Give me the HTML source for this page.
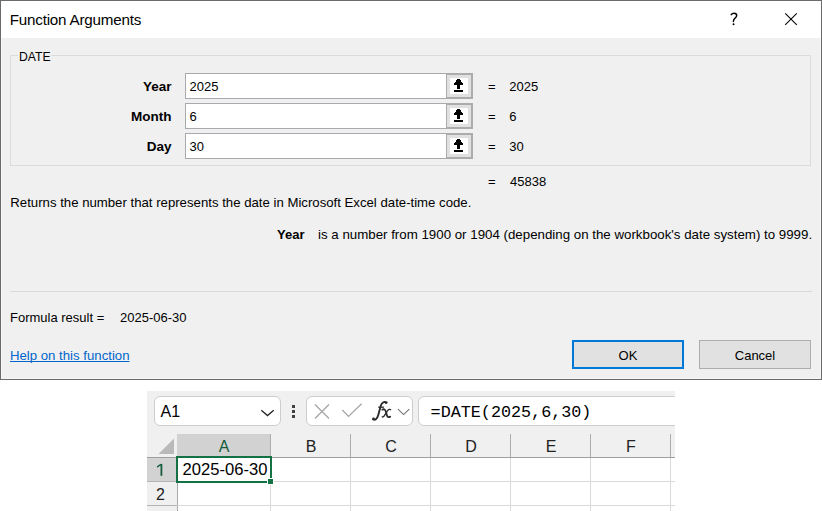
<!DOCTYPE html>
<html><head><meta charset="utf-8"><style>
html,body{margin:0;padding:0;width:822px;height:511px;overflow:hidden;background:#fff}
body{position:relative;font-family:"Liberation Sans",sans-serif}
body div, body svg{position:absolute}
body div div{position:absolute}
</style></head><body>
<div style="left:0px;top:0px;width:822px;height:511px;background:#fff"></div>
<div style="left:0px;top:0px;width:822px;height:380px;background:#6a6a6a"></div>
<div style="left:1px;top:1px;width:820px;height:378px;background:#f7f7f7"></div>
<div style="left:1px;top:1px;width:820px;height:37px;background:#fff"></div>
<div style="left:2px;top:38px;width:818px;height:340px;background:#f0f0f0"></div>
<div style="left:9.7px;top:12.33px;font-size:15.2px;line-height:15.2px;font-family:'Liberation Sans',sans-serif;white-space:pre;color:#000;letter-spacing:-0.2px">Function Arguments</div>
<svg style="left:726px;top:10px" width="16" height="18" viewBox="0 0 16 18"><path d="M5.2 4.7 C5.9 3.6 6.9 3.2 8 3.2 C9.6 3.2 10.7 4.2 10.7 5.5 C10.7 7 9.5 7.8 8.5 8.8 C7.7 9.6 7.4 10.3 7.4 11.5" stroke="#000" stroke-width="1.45" fill="none" stroke-linecap="round"/><circle cx="7.55" cy="14.2" r="1" fill="#000"/></svg>
<svg style="left:784px;top:12px" width="14" height="14" viewBox="0 0 14 14"><path d="M1.2 1.3L12.8 12.9M12.8 1.3L1.2 12.9" stroke="#000" stroke-width="1.05" fill="none"/></svg>
<div style="left:10px;top:55px;width:801px;height:111px;border:1px solid #dcdcdc;box-sizing:border-box"></div>
<div style="left:18px;top:50px;width:33px;height:10px;background:#f0f0f0"></div>
<div style="left:19px;top:50.67px;font-size:12.2px;line-height:12.2px;font-family:'Liberation Sans',sans-serif;white-space:pre;color:#000">DATE</div>
<div style="left:100px;top:79.57px;font-size:13.5px;line-height:13.5px;font-family:'Liberation Sans',sans-serif;white-space:pre;width:71.5px;text-align:right;font-weight:bold;color:#000">Year</div>
<div style="left:185px;top:73px;width:262px;height:26px;background:#fff;border:1px solid #a9aaae;box-sizing:border-box"></div>
<div style="left:189.6px;top:80.00px;font-size:13px;line-height:13px;font-family:'Liberation Sans',sans-serif;white-space:pre;color:#000">2025</div>
<div style="left:446px;top:73px;width:27px;height:26px;background:#e1e1e1;border:2px solid #acacac;border-left-width:1px;box-sizing:border-box"></div>
<div style="left:450px;top:78px;width:18px;height:16px;background:#fff"></div>
<svg style="left:450px;top:78px" width="18" height="16" viewBox="0 0 18 16"><path d="M7 1 H10 V2 H11 V4 H12 V5 H13 V7 H10 V11 H7 V7 H4 V5 H5 V4 H6 V2 H7 Z" fill="#000" shape-rendering="crispEdges"/><rect x="4" y="12" width="9" height="2" fill="#000"/></svg>
<div style="left:488px;top:80.00px;font-size:13px;line-height:13px;font-family:'Liberation Sans',sans-serif;white-space:pre;color:#000">=</div>
<div style="left:509.3px;top:80.00px;font-size:13px;line-height:13px;font-family:'Liberation Sans',sans-serif;white-space:pre;color:#000">2025</div>
<div style="left:100px;top:109.57px;font-size:13.5px;line-height:13.5px;font-family:'Liberation Sans',sans-serif;white-space:pre;width:71.5px;text-align:right;font-weight:bold;color:#000">Month</div>
<div style="left:185px;top:103px;width:262px;height:26px;background:#fff;border:1px solid #a9aaae;box-sizing:border-box"></div>
<div style="left:189.6px;top:110.00px;font-size:13px;line-height:13px;font-family:'Liberation Sans',sans-serif;white-space:pre;color:#000">6</div>
<div style="left:446px;top:103px;width:27px;height:26px;background:#e1e1e1;border:2px solid #acacac;border-left-width:1px;box-sizing:border-box"></div>
<div style="left:450px;top:108px;width:18px;height:16px;background:#fff"></div>
<svg style="left:450px;top:108px" width="18" height="16" viewBox="0 0 18 16"><path d="M7 1 H10 V2 H11 V4 H12 V5 H13 V7 H10 V11 H7 V7 H4 V5 H5 V4 H6 V2 H7 Z" fill="#000" shape-rendering="crispEdges"/><rect x="4" y="12" width="9" height="2" fill="#000"/></svg>
<div style="left:488px;top:110.00px;font-size:13px;line-height:13px;font-family:'Liberation Sans',sans-serif;white-space:pre;color:#000">=</div>
<div style="left:509.3px;top:110.00px;font-size:13px;line-height:13px;font-family:'Liberation Sans',sans-serif;white-space:pre;color:#000">6</div>
<div style="left:100px;top:139.57px;font-size:13.5px;line-height:13.5px;font-family:'Liberation Sans',sans-serif;white-space:pre;width:71.5px;text-align:right;font-weight:bold;color:#000">Day</div>
<div style="left:185px;top:133px;width:262px;height:26px;background:#fff;border:1px solid #a9aaae;box-sizing:border-box"></div>
<div style="left:189.6px;top:140.00px;font-size:13px;line-height:13px;font-family:'Liberation Sans',sans-serif;white-space:pre;color:#000">30</div>
<div style="left:446px;top:133px;width:27px;height:26px;background:#e1e1e1;border:2px solid #acacac;border-left-width:1px;box-sizing:border-box"></div>
<div style="left:450px;top:138px;width:18px;height:16px;background:#fff"></div>
<svg style="left:450px;top:138px" width="18" height="16" viewBox="0 0 18 16"><path d="M7 1 H10 V2 H11 V4 H12 V5 H13 V7 H10 V11 H7 V7 H4 V5 H5 V4 H6 V2 H7 Z" fill="#000" shape-rendering="crispEdges"/><rect x="4" y="12" width="9" height="2" fill="#000"/></svg>
<div style="left:488px;top:140.00px;font-size:13px;line-height:13px;font-family:'Liberation Sans',sans-serif;white-space:pre;color:#000">=</div>
<div style="left:509.3px;top:140.00px;font-size:13px;line-height:13px;font-family:'Liberation Sans',sans-serif;white-space:pre;color:#000">30</div>
<div style="left:488px;top:175.00px;font-size:13px;line-height:13px;font-family:'Liberation Sans',sans-serif;white-space:pre;color:#000">=</div>
<div style="left:510px;top:175.00px;font-size:13px;line-height:13px;font-family:'Liberation Sans',sans-serif;white-space:pre;color:#000">45838</div>
<div style="left:10.3px;top:195.83px;font-size:13.2px;line-height:13.2px;font-family:'Liberation Sans',sans-serif;white-space:pre;color:#000">Returns the number that represents the date in Microsoft Excel date-time code.</div>
<div style="left:277px;top:228.00px;font-size:13px;line-height:13px;font-family:'Liberation Sans',sans-serif;white-space:pre;font-weight:bold;color:#000">Year</div>
<div style="left:318px;top:227.73px;font-size:13.31px;line-height:13.31px;font-family:'Liberation Sans',sans-serif;white-space:pre;color:#000">is a number from 1900 or 1904 (depending on the workbook's date system) to 9999.</div>
<div style="left:10px;top:291px;width:802px;height:1px;background:#d9d9d9"></div>
<div style="left:10px;top:311.00px;font-size:13px;line-height:13px;font-family:'Liberation Sans',sans-serif;white-space:pre;color:#000">Formula result =</div>
<div style="left:120px;top:311.00px;font-size:13px;line-height:13px;font-family:'Liberation Sans',sans-serif;white-space:pre;color:#000">2025-06-30</div>
<div style="left:10px;top:348.83px;font-size:13.2px;line-height:13.2px;font-family:'Liberation Sans',sans-serif;white-space:pre;color:#0066cc;text-decoration:underline;text-decoration-skip-ink:none">Help on this function</div>
<div style="left:572px;top:340px;width:112px;height:29px;background:#e1e1e1;border:2px solid #0078d7;box-sizing:border-box"></div>
<div style="left:572px;top:349.00px;font-size:13px;line-height:13px;font-family:'Liberation Sans',sans-serif;white-space:pre;width:112px;text-align:center;color:#000">OK</div>
<div style="left:699px;top:340px;width:112px;height:29px;background:#e1e1e1;border:1px solid #adadad;box-sizing:border-box"></div>
<div style="left:699px;top:349.00px;font-size:13px;line-height:13px;font-family:'Liberation Sans',sans-serif;white-space:pre;width:112px;text-align:center;color:#000">Cancel</div>
<div style="left:147px;top:391px;width:528px;height:120px;background:#f0f0f0"></div>
<div style="left:154px;top:396px;width:127px;height:30px;background:#fff;border:1px solid #cdcdcd;border-radius:6px;box-sizing:border-box"></div>
<div style="left:160.5px;top:403.76px;font-size:16px;line-height:16px;font-family:'Liberation Sans',sans-serif;white-space:pre;color:#000">A1</div>
<svg style="left:260px;top:408px" width="15" height="9" viewBox="0 0 15 9"><path d="M1.3 2.2L7.5 7.6L13.7 2.2" stroke="#262626" stroke-width="1.35" fill="none"/></svg>
<div style="left:292px;top:405px;width:3px;height:3px;background:#404040"></div>
<div style="left:292px;top:410px;width:3px;height:3px;background:#404040"></div>
<div style="left:292px;top:415px;width:3px;height:3px;background:#404040"></div>
<div style="left:306px;top:396px;width:107px;height:30px;background:#fff;border:1px solid #cdcdcd;border-radius:6px;box-sizing:border-box"></div>
<svg style="left:314px;top:403.5px" width="16" height="15" viewBox="0 0 16 15"><path d="M1 0.5L15 14.5M15 0.5L1 14.5" stroke="#a6a6a6" stroke-width="1.3" fill="none"/></svg>
<svg style="left:341px;top:403px;overflow:visible" width="22" height="15" viewBox="0 0 22 15"><path d="M1.3 7L7.5 13.4L20.6 0.8" stroke="#a6a6a6" stroke-width="1.3" fill="none"/></svg>
<svg style="left:368px;top:396px" width="46" height="30" viewBox="0 0 46 30"><path d="M5 23.3 C7 24.6 9 23.4 10.2 19.2 L12.8 9.8 C13.8 6.6 15.8 5.3 18.7 6.4" stroke="#2b2b2b" stroke-width="1.9" fill="none" stroke-linecap="round"/><circle cx="5.6" cy="22.7" r="1.3" fill="#2b2b2b"/><circle cx="18" cy="6.9" r="1.1" fill="#2b2b2b"/><path d="M10.3 11.2 H15.9" stroke="#2b2b2b" stroke-width="1.3"/><path d="M14.4 13.6 C16.3 12.6 17.4 13.8 18 16 L18.9 19.3 C19.4 21 20.4 21.6 22.2 20.6" stroke="#2b2b2b" stroke-width="1.8" fill="none" stroke-linecap="round"/><path d="M22.7 13.7 C21.7 12.9 20.6 13.3 19.6 14.6 L16.5 19.4 C15.8 20.7 15 21.3 14.2 20.8" stroke="#2b2b2b" stroke-width="1.3" fill="none" stroke-linecap="round"/></svg>
<svg style="left:397px;top:408px" width="13" height="8" viewBox="0 0 13 8"><path d="M1 1.2L6.6 6.6L12.3 1.2" stroke="#707070" stroke-width="1.1" fill="none"/></svg>
<div style="left:418px;top:396px;width:257px;height:30px;overflow:hidden"><div style="left:0;top:0;width:300px;height:30px;background:#fff;border:1px solid #cdcdcd;border-radius:6px;box-sizing:border-box"></div></div>
<div style="left:430.6px;top:404.87px;font-size:16.75px;line-height:16.75px;font-family:'Liberation Mono',monospace;white-space:pre;color:#000">=DATE(2025,6,30)</div>
<div style="left:147px;top:458px;width:528px;height:53px;background:#fff"></div>
<div style="left:147px;top:457px;width:528px;height:1px;background:#9e9e9e"></div>
<div style="left:177px;top:434px;width:94px;height:23px;background:#d2d2d2"></div>
<svg style="left:158px;top:438px" width="17" height="17" viewBox="0 0 17 17"><path d="M16 0.5L16 16L0.5 16Z" fill="#b9b9b9"/></svg>
<div style="left:147px;top:458px;width:30px;height:53px;background:#f0f0f0"></div>
<div style="left:147px;top:458px;width:30px;height:24px;background:#d2d2d2"></div>
<div style="left:270px;top:434px;width:1px;height:23px;background:#acacac"></div>
<div style="left:270px;top:458px;width:1px;height:53px;background:#dadada"></div>
<div style="left:350px;top:434px;width:1px;height:23px;background:#acacac"></div>
<div style="left:350px;top:458px;width:1px;height:53px;background:#dadada"></div>
<div style="left:430px;top:434px;width:1px;height:23px;background:#acacac"></div>
<div style="left:430px;top:458px;width:1px;height:53px;background:#dadada"></div>
<div style="left:510px;top:434px;width:1px;height:23px;background:#acacac"></div>
<div style="left:510px;top:458px;width:1px;height:53px;background:#dadada"></div>
<div style="left:590px;top:434px;width:1px;height:23px;background:#acacac"></div>
<div style="left:590px;top:458px;width:1px;height:53px;background:#dadada"></div>
<div style="left:670px;top:434px;width:1px;height:23px;background:#acacac"></div>
<div style="left:670px;top:458px;width:1px;height:53px;background:#dadada"></div>
<div style="left:177px;top:458px;width:1px;height:53px;background:#a8a8a8"></div>
<div style="left:177px;top:481px;width:498px;height:1px;background:#dadada"></div>
<div style="left:147px;top:481px;width:30px;height:1px;background:#b4b4b4"></div>
<div style="left:177px;top:505px;width:498px;height:1px;background:#dadada"></div>
<div style="left:147px;top:505px;width:30px;height:1px;background:#b4b4b4"></div>
<div style="left:177px;top:439.06px;font-size:16px;line-height:16px;font-family:'Liberation Sans',sans-serif;white-space:pre;width:94px;text-align:center;color:#145c3a">A</div>
<div style="left:271px;top:439.06px;font-size:16px;line-height:16px;font-family:'Liberation Sans',sans-serif;white-space:pre;width:80px;text-align:center;color:#222">B</div>
<div style="left:351px;top:439.06px;font-size:16px;line-height:16px;font-family:'Liberation Sans',sans-serif;white-space:pre;width:80px;text-align:center;color:#222">C</div>
<div style="left:431px;top:439.06px;font-size:16px;line-height:16px;font-family:'Liberation Sans',sans-serif;white-space:pre;width:80px;text-align:center;color:#222">D</div>
<div style="left:511px;top:439.06px;font-size:16px;line-height:16px;font-family:'Liberation Sans',sans-serif;white-space:pre;width:80px;text-align:center;color:#222">E</div>
<div style="left:591px;top:439.06px;font-size:16px;line-height:16px;font-family:'Liberation Sans',sans-serif;white-space:pre;width:80px;text-align:center;color:#222">F</div>
<svg style="left:152px;top:460px" width="18" height="20" viewBox="0 0 18 20"><path d="M9.4 4.1 V15.8" stroke="#145c3a" stroke-width="1.8" fill="none"/><path d="M5.6 6.8 C6.8 5.5 8 4.9 9.4 4.5" stroke="#145c3a" stroke-width="1.4" fill="none" stroke-linecap="round"/></svg>
<div style="left:145.5px;top:486.96px;font-size:16px;line-height:16px;font-family:'Liberation Sans',sans-serif;white-space:pre;width:30px;text-align:center;color:#222">2</div>
<div style="left:176px;top:456px;width:96px;height:27px;border:2px solid #137143;box-sizing:border-box"></div>
<div style="left:267px;top:478px;width:7px;height:7px;background:#fff"></div>
<div style="left:268px;top:479px;width:5px;height:5px;background:#137143"></div>
<div style="left:182.6px;top:462.15px;font-size:16.6px;line-height:16.6px;font-family:'Liberation Sans',sans-serif;white-space:pre;color:#000">2025-06-30</div>
</body></html>
